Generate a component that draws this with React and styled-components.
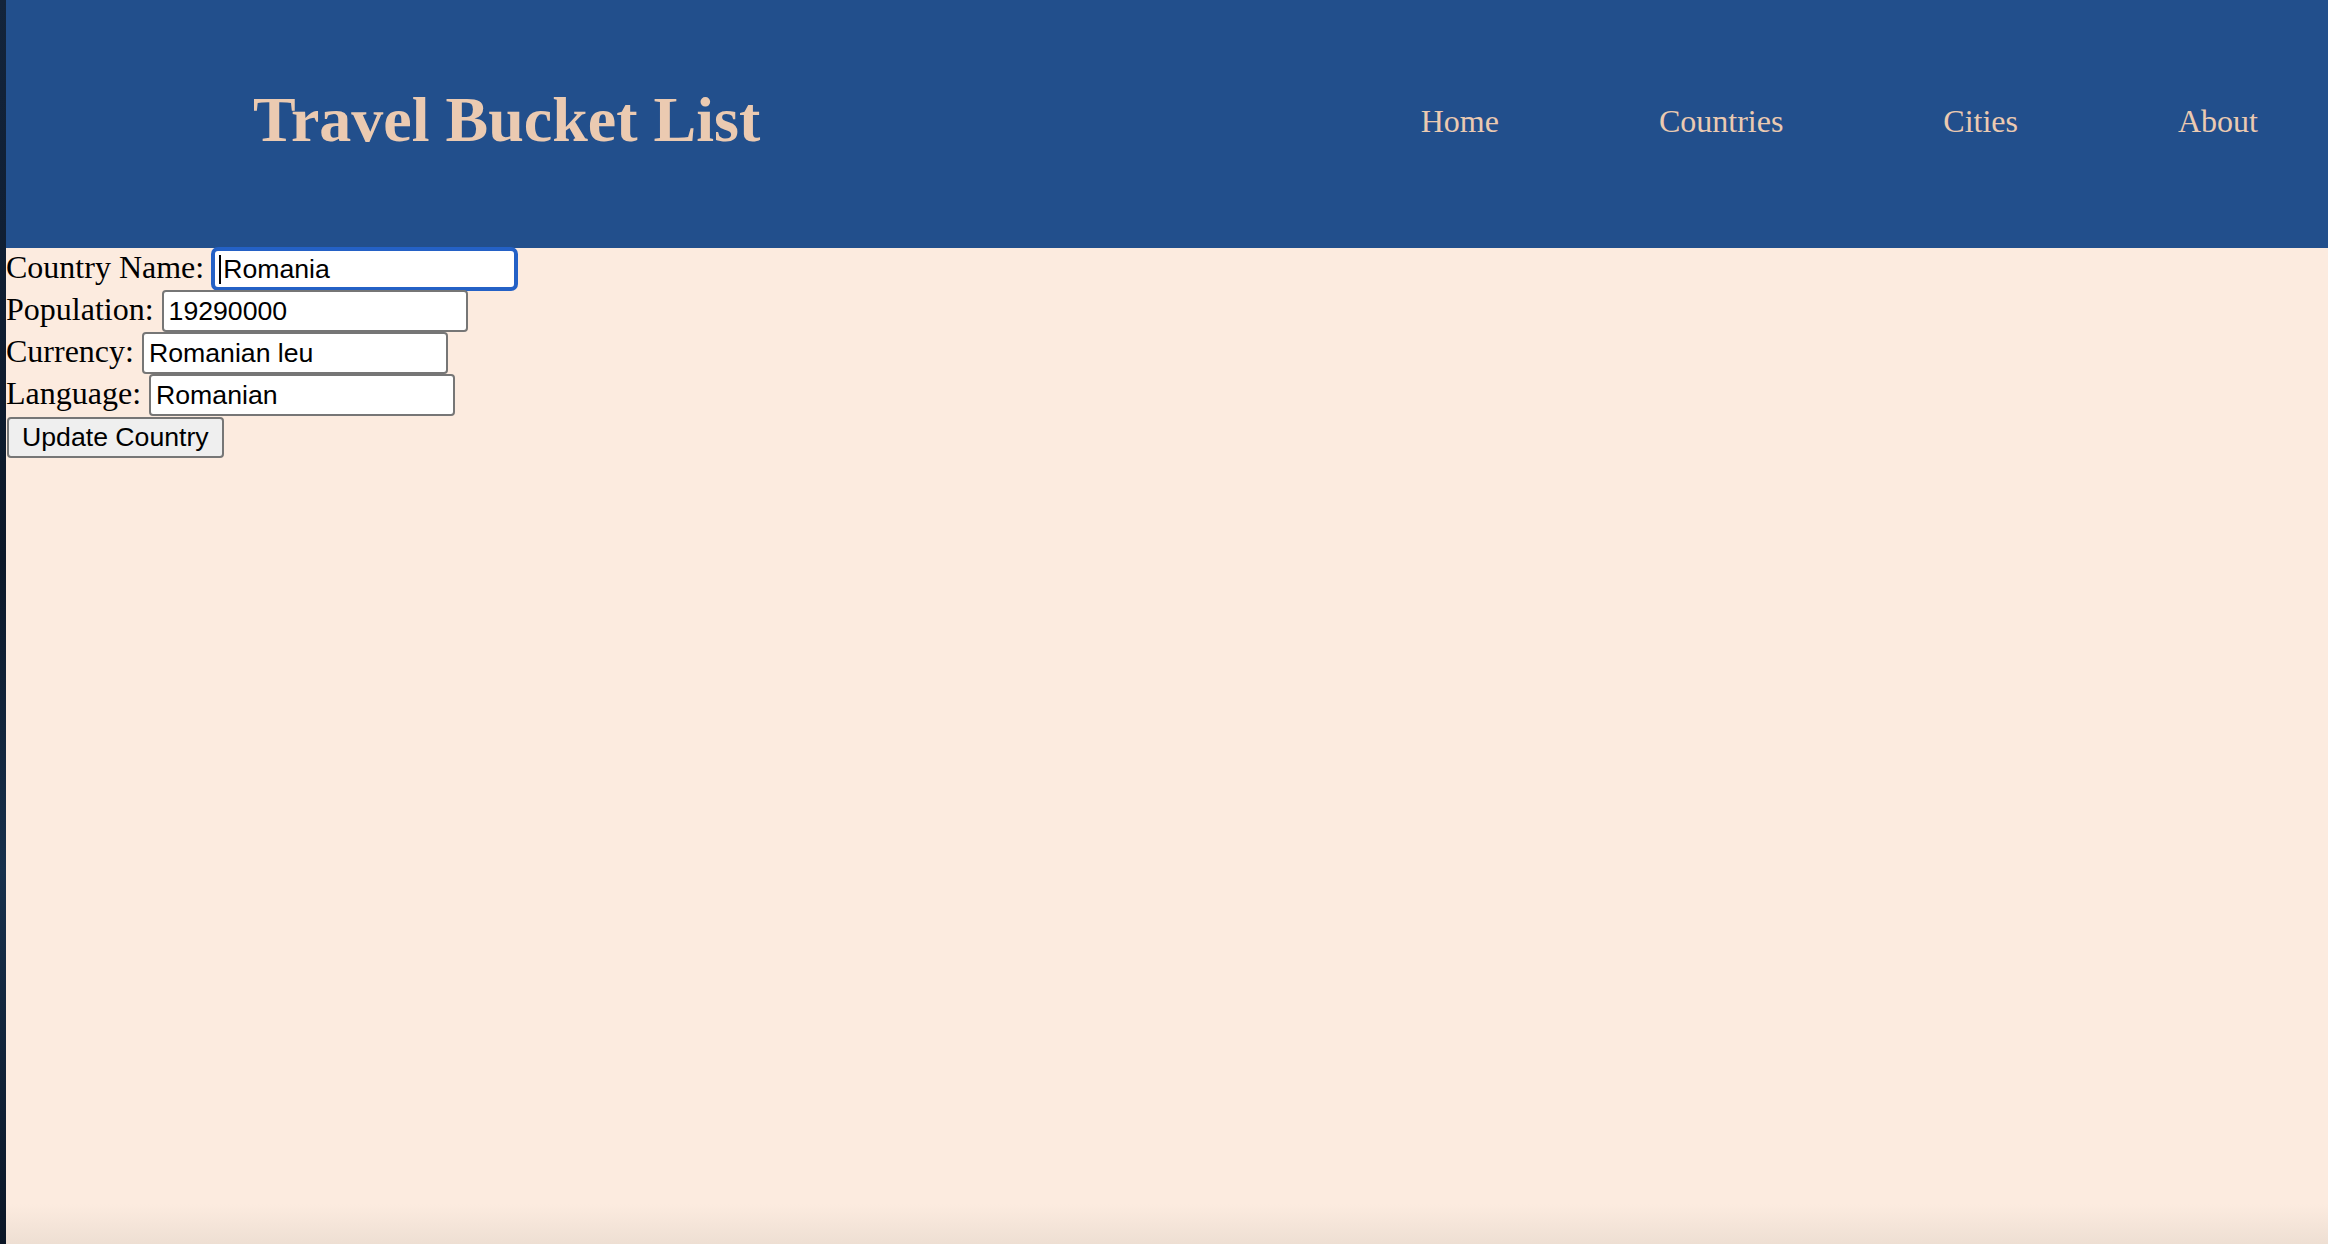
import React, { useState } from 'react';
import styled, { createGlobalStyle, css } from 'styled-components';

const GlobalStyle = createGlobalStyle`
  html, body {
    margin: 0;
    padding: 0;
    height: 100%;
  }
  body {
    background: #0d1a2b;
    font-family: "Liberation Serif", "Times New Roman", serif;
  }
  #root {
    height: 100%;
  }
`;

const Shell = styled.div`
  display: flex;
  min-height: 100vh;
`;

// the bit of desktop showing at the left edge of the window
const Desktop = styled.div`
  width: 6px;
  flex-shrink: 0;
  background: linear-gradient(to bottom, #13243b 0%, #0c1829 45%, #17304c 70%, #0b1626 100%);
`;

const Window = styled.div`
  flex: 1;
  min-width: 0;
  display: flex;
  flex-direction: column;
`;

const Header = styled.header`
  height: 248px;
  box-sizing: border-box;
  padding: 0 70px 0 247px;
  display: flex;
  justify-content: space-between;
  align-items: flex-start;
  background: #224f8c;
`;

const Title = styled.h1`
  margin: 88px 0 0;
  font-family: "Liberation Serif", "Times New Roman", serif;
  font-size: 64px;
  line-height: 64px;
  font-weight: bold;
  color: #ebcab1;
`;

const Nav = styled.nav`
  margin-top: 105px;
`;

const NavList = styled.ul`
  list-style: none;
  display: flex;
  gap: 160px;
  margin: 0;
  padding: 0;
`;

const NavLink = styled.a`
  font-size: 32px;
  line-height: 32px;
  color: #ebcab1;
  text-decoration: none;
  cursor: pointer;
`;

const Main = styled.main`
  flex: 1;
  background: linear-gradient(to bottom, #fcebdf 0, #fcebdf calc(100% - 40px), #eedfd3 100%);
`;

const Form = styled.form`
  display: flex;
  flex-direction: column;
  align-items: flex-start;
`;

const Field = styled.div`
  display: flex;
  align-items: baseline;
`;

const Label = styled.label`
  margin-right: 8px;
  font-size: 32px;
  color: #000;
`;

const TextInput = styled.input`
  box-sizing: border-box;
  width: 306px;
  height: 42px;
  margin: 0;
  padding: 0 5px;
  border: 2px solid #767676;
  border-radius: 4px;
  background: #fff;
  font-family: "Liberation Sans", Arial, sans-serif;
  font-size: 26.67px;
  color: #000;
  outline: none;

  ${({ $focused }) => $focused && css`
    width: 305px;
    padding-left: 8px;
    border: 3px solid #2461c6;
    border-radius: 6px;
    box-shadow: 0 0 0 1px #2461c6;
    background: #fff linear-gradient(#000, #000) no-repeat 4px center / 2px 29px;
  `}
`;

const Button = styled.button`
  box-sizing: border-box;
  height: 41px;
  margin: 1px 0 0 1px;
  padding: 0 13px;
  border: 2px solid #767676;
  border-radius: 4px;
  background: #efefef;
  font-family: "Liberation Sans", Arial, sans-serif;
  font-size: 26.67px;
  color: #000;
`;

const links = ['Home', 'Countries', 'Cities', 'About'];

const fields = [
  { key: 'name', label: 'Country Name:' },
  { key: 'population', label: 'Population:' },
  { key: 'currency', label: 'Currency:' },
  { key: 'language', label: 'Language:' },
];

const App = () => {
  const [country, setCountry] = useState({
    name: 'Romania',
    population: '19290000',
    currency: 'Romanian leu',
    language: 'Romanian',
  });

  return (
    <>
      <GlobalStyle />
      <Shell>
        <Desktop />
        <Window>
          <Header>
            <Title>Travel Bucket List</Title>
            <Nav>
              <NavList>
                {links.map((l) => (
                  <li key={l}>
                    <NavLink href="#">{l}</NavLink>
                  </li>
                ))}
              </NavList>
            </Nav>
          </Header>
          <Main>
            <Form onSubmit={(e) => e.preventDefault()}>
              {fields.map(({ key, label }, i) => (
                <Field key={key}>
                  <Label htmlFor={key}>{label}</Label>
                  <TextInput
                    id={key}
                    type="text"
                    $focused={i === 0}
                    value={country[key]}
                    onChange={(e) => setCountry({ ...country, [key]: e.target.value })}
                  />
                </Field>
              ))}
              <Button type="submit">Update Country</Button>
            </Form>
          </Main>
        </Window>
      </Shell>
    </>
  );
};

export default App;
